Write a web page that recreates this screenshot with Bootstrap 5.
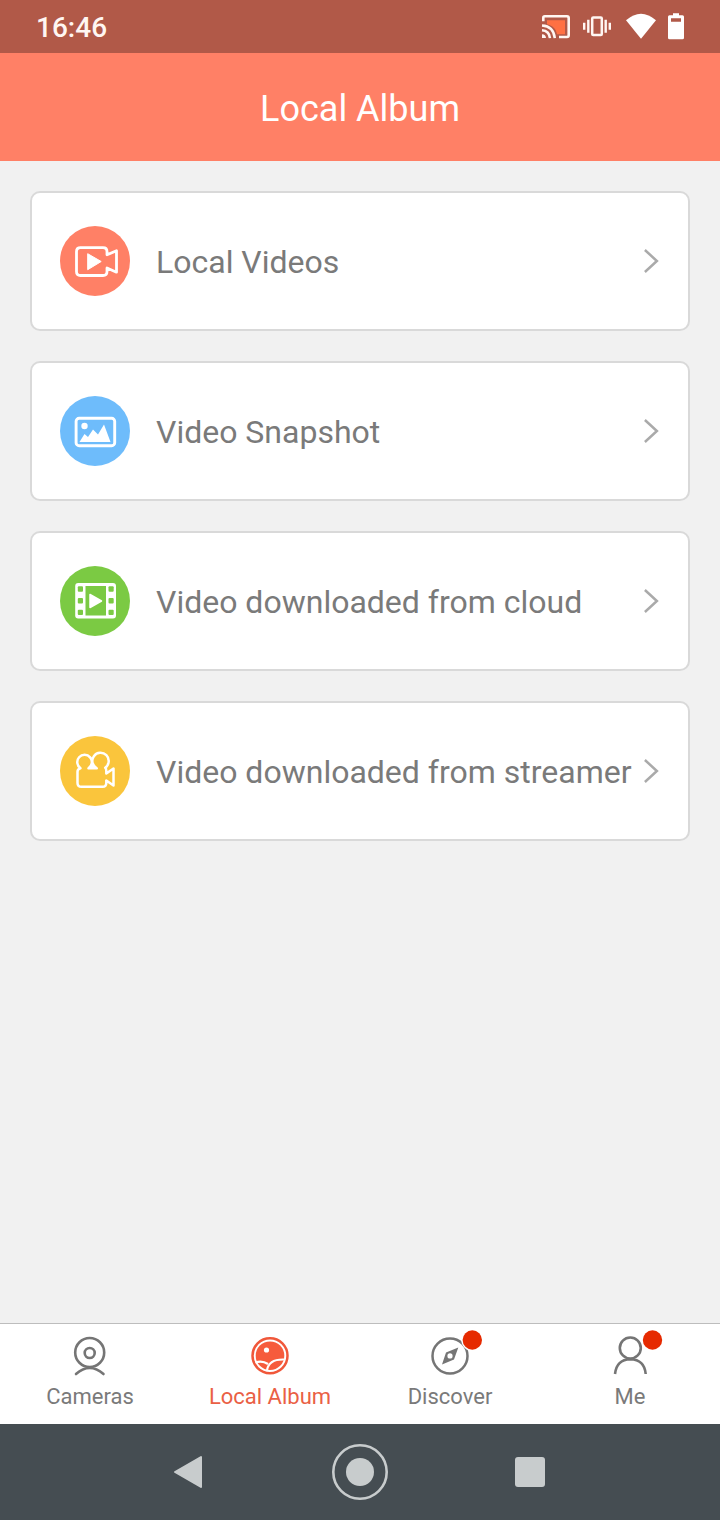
<!DOCTYPE html>
<html lang="en">
<head>
<meta charset="utf-8">
<meta name="viewport" content="width=device-width, initial-scale=1">
<title>Local Album</title>
<link href="https://cdn.jsdelivr.net/npm/bootstrap@5.3.0/dist/css/bootstrap.min.css" rel="stylesheet">
<style>
body{font-family:Roboto,"Liberation Sans",sans-serif;background:#f1f1f1;color:#777;line-height:1}
svg{display:block;flex:none;overflow:visible}
.status-bar{height:53px;background:#b15948;padding-left:36px;padding-right:36px}
.clock{font-size:28px;font-weight:500;color:#fff6f2;padding-top:2px}
.title-bar{height:108px;background:#ff8066;color:#fff}
.title-bar h1{font-size:36px;font-weight:400;padding-top:5px}
.album-list{padding:30px;gap:30px}
.album-card{height:140px;border:2px solid #d9d9d9;border-radius:10px;padding:0 28px;color:#7a7a7a;font-size:32px}
.album-card .label{margin-left:26px;padding-top:2px}
.tab-bar{height:101px;border-top:1px solid #bdbdbd;background:#fff;font-size:22px}
.tab-item{color:#7a7a7a;padding-top:6px}
.tab-item.active{color:#ea6045}
.tab-item span{margin-top:6px}
.system-bar{height:96px;background:#454d52}
</style>
</head>
<body>
<div class="d-flex flex-column vh-100 overflow-hidden">
  <header>
    <div class="status-bar d-flex align-items-center justify-content-between">
      <div class="clock">16:46</div>
      <svg width="144" height="32" viewBox="540 10.700 144 32" fill="none" stroke="#fff6f2">
        <path d="M547 20H565V34H557C556 28 552 25 547 24Z" fill="#ff7043" stroke="none"/>
        <path d="M543.3 21V17.500Q543.300 16 544.800 16H567Q568.700 16 568.700 17.700V35Q568.700 36.700 567 36.700H559" stroke-width="2.600"/>
        <path d="M542 25.200Q553.500 25.800 554.800 37.800M542 30Q549.200 30.500 550 37.800" stroke-width="2.500"/>
        <path d="M542 34Q545.800 34.200 546 37.800H542Z" fill="#fff6f2" stroke="none"/>
        <rect x="592.200" y="17.200" width="9.600" height="17.600" rx="1" stroke-width="2.500"/>
        <path d="M588.300 19.500V32.500M605.700 19.500V32.500M584.200 22.500V29.500M609.800 22.500V29.500" stroke-width="2.400"/>
        <path d="M626 20Q641 7 656 20L641 38.500Z" fill="#fff" stroke="none"/>
        <path fill-rule="evenodd" d="M673 13H679V15H682.500Q684 15 684 16.500V37.500Q684 39 682.500 39H669.500Q668 39 668 37.500V16.500Q668 15 669.500 15H673ZM671 18V21.500H681V18Z" fill="#fff" stroke="none"/>
      </svg>
    </div>
    <div class="title-bar d-flex align-items-center justify-content-center"><h1 class="m-0">Local Album</h1></div>
  </header>

  <main class="album-list d-flex flex-column flex-grow-1">
    <a href="#" class="album-card card flex-row align-items-center text-decoration-none">
      <svg width="70" height="70" viewBox="0 0 70 70"><circle cx="35" cy="35" r="35" fill="#ff8066"/>
        <g fill="none" stroke="#fff" stroke-width="2.800" stroke-linejoin="round"><path d="M20 21.700H43Q47 21.700 47 25.700V28.800L56.500 24.800V46.200L47 42V45.500Q47 49.500 43 49.500H20.500Q16.500 49.500 16.500 45.500V25.700Q16.500 21.700 20.500 21.700Z"/></g>
        <path d="M27.700 27.700L41.200 35.500L27.700 43.700Z" fill="#fff" stroke="#fff" stroke-linejoin="round"/></svg>
      <span class="label">Local Videos</span>
      <svg class="ms-auto" width="18" height="26" viewBox="0.600 0 18 26" fill="none" stroke="#aaa" stroke-width="2.500"><path d="M3.500 2L15.500 13L3.500 24"/></svg>
    </a>
    <a href="#" class="album-card card flex-row align-items-center text-decoration-none">
      <svg width="70" height="70" viewBox="0 0 70 70"><circle cx="35" cy="35" r="35" fill="#6ebcfb"/>
        <rect x="16.100" y="22.300" width="38.600" height="27.400" rx="3" fill="none" stroke="#fff" stroke-width="2.900"/>
        <circle cx="24.500" cy="30" r="3.200" fill="#fff"/><path d="M19.500 46L24.500 38L28 41L33 33.500L38 38.500L44 28.500L50.500 46Z" fill="#fff"/></svg>
      <span class="label">Video Snapshot</span>
      <svg class="ms-auto" width="18" height="26" viewBox="0.600 0 18 26" fill="none" stroke="#aaa" stroke-width="2.500"><path d="M3.500 2L15.500 13L3.500 24"/></svg>
    </a>
    <a href="#" class="album-card card flex-row align-items-center text-decoration-none">
      <svg width="70" height="70" viewBox="0 0 70 70"><circle cx="35" cy="35" r="35" fill="#7bca43"/>
        <rect x="15.200" y="17" width="40.800" height="35.500" rx="3" fill="#fff"/>
        <g fill="#7bca43"><rect x="25.500" y="20" width="20.500" height="29.500"/>
        <rect x="17.800" y="20.300" width="5.200" height="5.400" rx="1"/><rect x="17.800" y="32" width="5.200" height="5.400" rx="1"/><rect x="17.800" y="43.700" width="5.200" height="5.400" rx="1"/>
        <rect x="48.500" y="20.300" width="5.200" height="5.400" rx="1"/><rect x="48.500" y="32" width="5.200" height="5.400" rx="1"/><rect x="48.500" y="43.700" width="5.200" height="5.400" rx="1"/></g>
        <path d="M30 28.500L41.500 35L30 41.500Z" fill="#fff" stroke="#fff" stroke-width="1.500" stroke-linejoin="round"/></svg>
      <span class="label">Video downloaded from cloud</span>
      <svg class="ms-auto" width="18" height="26" viewBox="0.600 0 18 26" fill="none" stroke="#aaa" stroke-width="2.500"><path d="M3.500 2L15.500 13L3.500 24"/></svg>
    </a>
    <a href="#" class="album-card card flex-row align-items-center text-decoration-none">
      <svg width="70" height="70" viewBox="0 0 70 70"><circle cx="35" cy="35" r="35" fill="#fac53c"/>
        <path d="M20.500 32.200A7.300 7.300 0 1 1 28.500 32.300H36.800A8.200 8.200 0 1 1 45.200 31.700Q46.300 32.800 46.300 35V37.500L53.500 32.500V49.500L46.300 44.500V47Q46.300 50.800 42.500 50.800H21.500Q17.500 50.800 17.500 47V35.800Q17.500 33 20.500 32.200Z" fill="none" stroke="#fff" stroke-width="2.500" stroke-linejoin="round"/>
        <path d="M28 33L32.600 26.500L37.500 33Z" fill="#fff"/></svg>
      <span class="label">Video downloaded from streamer</span>
      <svg class="ms-auto" width="18" height="26" viewBox="0.600 0 18 26" fill="none" stroke="#aaa" stroke-width="2.500"><path d="M3.500 2L15.500 13L3.500 24"/></svg>
    </a>
  </main>

  <nav class="tab-bar row g-0 flex-shrink-0">
    <a href="#" class="tab-item col d-flex flex-column align-items-center text-decoration-none">
      <svg width="60" height="50" viewBox="60 1330 60 50" fill="none" stroke="#757575" stroke-width="2.600" stroke-linecap="round"><circle cx="89.700" cy="1352.500" r="14.500"/><circle cx="89.700" cy="1353" r="5"/><path d="M76 1374Q89.700 1362 103.500 1374"/></svg>
      <span>Cameras</span>
    </a>
    <a href="#" class="tab-item active col d-flex flex-column align-items-center text-decoration-none">
      <svg width="60" height="50" viewBox="240 1330 60 50"><circle cx="270" cy="1355.700" r="17.500" fill="none" stroke="#f0573a" stroke-width="2.500"/><circle cx="270" cy="1355.700" r="14.300" fill="#f65b3c"/><circle cx="266.500" cy="1350" r="2.600" fill="#fff"/><path d="M255.500 1362.500Q262 1360 268 1364M267 1370Q269 1359 284 1359.500" fill="none" stroke="#fff" stroke-width="2.200"/></svg>
      <span>Local Album</span>
    </a>
    <a href="#" class="tab-item col d-flex flex-column align-items-center text-decoration-none">
      <svg width="60" height="50" viewBox="420 1330 60 50"><circle cx="450" cy="1356" r="17.500" fill="none" stroke="#757575" stroke-width="2.500"/><path fill-rule="evenodd" d="M458.300 1347.500L454 1359.500L442 1364.500L446 1352.500ZM450 1353.300A2.600 2.600 0 1 0 450 1358.500A2.600 2.600 0 1 0 450 1353.300Z" fill="#757575"/><circle cx="472.300" cy="1340" r="11" fill="#fff"/><circle cx="472.300" cy="1340" r="9.700" fill="#e62a00"/></svg>
      <span>Discover</span>
    </a>
    <a href="#" class="tab-item col d-flex flex-column align-items-center text-decoration-none">
      <svg width="66" height="50" viewBox="597 1330 66 50"><g fill="none" stroke="#757575" stroke-width="2.600"><circle cx="630.300" cy="1348" r="10.500"/><path d="M615 1374Q616.500 1359.500 630.300 1359.200Q644.500 1359.500 645.700 1374"/></g><circle cx="652.500" cy="1340" r="9.700" fill="#e62a00"/></svg>
      <span>Me</span>
    </a>
  </nav>

  <footer class="system-bar d-flex justify-content-center align-items-center flex-shrink-0">
    <svg width="420" height="96" viewBox="150 1424 420 96" fill="#c8cccd"><path d="M175 1472L201 1457V1487Z" stroke="#c8cccd" stroke-width="2" stroke-linejoin="round"/><circle cx="360" cy="1472" r="14"/><circle cx="360" cy="1472" r="26.700" fill="none" stroke="#c8cccd" stroke-width="2.600"/><rect x="515" y="1457" width="30" height="30" rx="3"/></svg>
  </footer>
</div>
<script src="https://cdn.jsdelivr.net/npm/bootstrap@5.3.0/dist/js/bootstrap.bundle.min.js"></script>
</body>
</html>
